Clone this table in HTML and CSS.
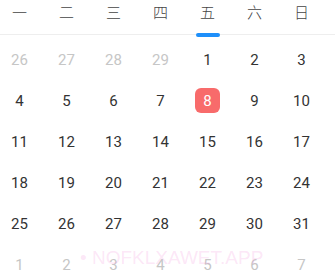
FILE: index.html
```html
<!DOCTYPE html>
<html>
<head>
<meta charset="utf-8">
<link rel="stylesheet" href="styles.css">
</head>
<body>
<div class="cal">
  <div class="week">
    <div class="wd">一</div>
    <div class="wd">二</div>
    <div class="wd">三</div>
    <div class="wd">四</div>
    <div class="wd active">五<span class="ind"></span></div>
    <div class="wd">六</div>
    <div class="wd">日</div>
  </div>
  <div class="days">
    <div class="d other">26</div><div class="d other">27</div><div class="d other">28</div><div class="d other">29</div><div class="d">1</div><div class="d">2</div><div class="d">3</div>
    <div class="d">4</div><div class="d">5</div><div class="d">6</div><div class="d">7</div><div class="d"><span class="sel">8</span></div><div class="d">9</div><div class="d">10</div>
    <div class="d">11</div><div class="d">12</div><div class="d">13</div><div class="d">14</div><div class="d">15</div><div class="d">16</div><div class="d">17</div>
    <div class="d">18</div><div class="d">19</div><div class="d">20</div><div class="d">21</div><div class="d">22</div><div class="d">23</div><div class="d">24</div>
    <div class="d">25</div><div class="d">26</div><div class="d">27</div><div class="d">28</div><div class="d">29</div><div class="d">30</div><div class="d">31</div>
    <div class="d other">1</div><div class="d other">2</div><div class="d other">3</div><div class="d other">4</div><div class="d other">5</div><div class="d other">6</div><div class="d other">7</div>
  </div>
  <div class="wm">• NOFKLXAWET.APP</div>
</div>
</body>
</html>
```
FILE: styles.css
```css
html, body {
  margin: 0;
  padding: 0;
  background: #fff;
}
body {
  font-family: Roboto, "Noto Sans CJK SC", sans-serif;
  color: #333;
  width: 335px;
  height: 279px;
  overflow: hidden;
}
.cal {
  position: relative;
}
.week {
  display: grid;
  grid-template-columns: repeat(7, 39px);
  column-gap: 8px;
  height: 34px;
  border-bottom: 1px solid #eeeeee;
}
.wd {
  position: relative;
  display: flex;
  justify-content: center;
  padding-top: 2px;
  font-family: "Noto Sans CJK SC", sans-serif;
  font-size: 15px;
  font-weight: 300;
  line-height: 20px;
  color: #444;
}
.ind {
  position: absolute;
  left: 50%;
  bottom: -3px;
  width: 24px;
  height: 4px;
  margin-left: -12px;
  border-radius: 2px;
  background: #1e8ffa;
}
.days {
  display: grid;
  grid-template-columns: repeat(7, 39px);
  grid-auto-rows: 41px;
  column-gap: 8px;
  padding-top: 4px;
}
.d {
  display: flex;
  align-items: center;
  justify-content: center;
  font-size: 15px;
  color: #333;
}
.d.other {
  color: #c6c6c6;
}
.sel {
  display: flex;
  align-items: center;
  justify-content: center;
  width: 25px;
  height: 25px;
  border-radius: 6px;
  background: #f86b6b;
  color: #fff;
}
.wm {
  position: absolute;
  left: 80px;
  top: 247px;
  font-family: "Liberation Sans", sans-serif;
  font-size: 19px;
  line-height: 22px;
  color: rgba(245, 150, 220, 0.24);
  white-space: nowrap;
  pointer-events: none;
}
```
